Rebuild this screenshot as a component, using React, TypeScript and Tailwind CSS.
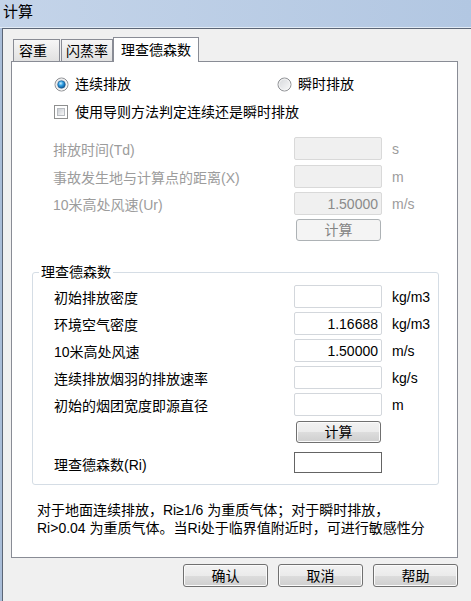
import { useId, type ReactNode } from 'react';

// ── Shared bits ───────────────────────────────────────────────────────────────

const FONT = "font-['Liberation_Sans','Noto_Sans_CJK_SC',sans-serif]";

function Radio({ checked }: { checked: boolean }) {
  const id = useId().replace(/:/g, '');
  return (
    <svg width="15" height="15" viewBox="0 0 15 15" className="shrink-0">
      <defs>
        <linearGradient id={`${id}f`} x1="0" y1="0" x2="1" y2="1">
          <stop offset="0" stopColor="#d4d6d9" />
          <stop offset="1" stopColor="#fbfbfb" />
        </linearGradient>
        <radialGradient id={`${id}d`} cx="0.4" cy="0.35" r="0.7">
          <stop offset="0" stopColor="#c8eeff" />
          <stop offset="0.45" stopColor="#2b9be0" />
          <stop offset="1" stopColor="#0c4a86" />
        </radialGradient>
      </defs>
      <circle cx="7.5" cy="7.5" r="6.5" fill={`url(#${id}f)`} stroke="#8d8f93" />
      <circle cx="7.5" cy="7.5" r="5.4" fill="none" stroke="#f6f6f6" strokeWidth="0.8" />
      {checked && (
        <circle cx="7.5" cy="7.5" r="3.8" fill={`url(#${id}d)`} stroke="#1b5a91" strokeWidth="0.6" />
      )}
    </svg>
  );
}

function Checkbox() {
  return (
    <span className="flex w-[14px] h-[14px] shrink-0 border border-[#8e8f8f] bg-white p-[2px]">
      <span className="flex-1 border border-[#b8bcc1] bg-[linear-gradient(135deg,#caced4,#f7f7f7)]" />
    </span>
  );
}

function Field({ value, disabled }: { value?: string; disabled?: boolean }) {
  return (
    <div
      className={`flex items-center justify-end w-[88px] h-[23px] shrink-0 pr-[3px] rounded-[2px] border text-[14px] ${
        disabled ? 'bg-[#f0f0f0] border-[#d9d9d9] text-[#8a8a8a]' : 'bg-white border-[#d3d7dc] text-black'
      }`}
    >
      {value}
    </div>
  );
}

function Btn({ children, disabled, wide }: { children: ReactNode; disabled?: boolean; wide?: boolean }) {
  return (
    <div
      className={`flex items-center justify-center shrink-0 rounded-[3px] border text-[14px] leading-none ${
        wide ? 'w-[85px] h-[23px]' : 'w-[85px] h-[22px]'
      } ${
        disabled
          ? 'bg-[#f4f4f4] border-[#adb2b5] text-[#838383]'
          : 'bg-[linear-gradient(#f2f2f2_0%,#ebebeb_50%,#dddddd_50%,#cfcfcf_100%)] border-[#707070] text-black shadow-[inset_0_0_0_1px_#fbfbfb]'
      }`}
    >
      {children}
    </div>
  );
}

function Row({ label, value, unit, disabled, labelW }: {
  label: string;
  value?: string;
  unit?: string;
  disabled?: boolean;
  labelW: string;
}) {
  return (
    <div className="flex items-center h-[23px]">
      <span className={`${labelW} pt-[2px] whitespace-nowrap ${disabled ? 'text-[#9c9c9c]' : 'text-black'}`}>{label}</span>
      <Field value={value} disabled={disabled} />
      <span className={`ml-[10px] pt-[1px] ${disabled ? 'text-[#9c9c9c]' : 'text-black'}`}>{unit}</span>
    </div>
  );
}

// ── Page ──────────────────────────────────────────────────────────────────────

export default function App() {
  return (
    <div className={`${FONT} flex flex-col w-[471px] h-[601px] overflow-hidden bg-[#f0f0f0] text-[14px] leading-[18px] text-black`}>
      {/* Title bar */}
      <div className="h-[28px] shrink-0 border-b border-[#e2ebf5] bg-[linear-gradient(90deg,#c4d4e9,#b2c7e2)] pl-[3px] pt-[3px] text-[15px] leading-[18px]">
        计算
      </div>

      {/* Window body */}
      <div className="flex-1 flex border-l-2 border-[#a9bdd8]">
        <div className="flex-1 flex flex-col border-l border-t border-[#5c6676] pt-[8px]">
          {/* Tabs */}
          <div className="flex items-end h-[24px] ml-[10px]">
            <div className="w-[47px] h-[22px] pl-[5px] flex items-center border border-b-0 border-[#898c95] bg-[linear-gradient(#f6f6f6,#e1e1e1)]">
              容重
            </div>
            <div className="w-[52px] h-[22px] ml-px pl-[4px] flex items-center border border-b-0 border-[#898c95] bg-[linear-gradient(#f6f6f6,#e1e1e1)]">
              闪蒸率
            </div>
            <div className="relative z-10 -mb-px w-[86px] h-[25px] pl-[7px] flex items-center border border-b-0 border-[#898c95] bg-white">
              理查德森数
            </div>
          </div>

          {/* Tab panel */}
          <div className="ml-[8px] w-[447px] h-[497px] flex flex-col border border-[#898c95] bg-white">
            {/* Mode radios */}
            <div className="flex items-center h-[20px] mt-[12px] pl-[42px]">
              <div className="flex items-center w-[223px] gap-[6px]">
                <Radio checked />
                <span>连续排放</span>
              </div>
              <div className="flex items-center gap-[6px]">
                <Radio checked={false} />
                <span>瞬时排放</span>
              </div>
            </div>
            <div className="flex items-center h-[20px] mt-[8px] pl-[42px] gap-[7px]">
              <Checkbox />
              <span>使用导则方法判定连续还是瞬时排放</span>
            </div>

            {/* Disabled guideline inputs */}
            <div className="flex flex-col pl-[41px] mt-[15px]">
              <Row labelW="w-[241px]" label="排放时间(Td)" unit="s" disabled />
              <div className="mt-[5px]">
                <Row labelW="w-[241px]" label="事故发生地与计算点的距离(X)" unit="m" disabled />
              </div>
              <div className="mt-[4px]">
                <Row labelW="w-[241px]" label="10米高处风速(Ur)" value="1.50000" unit="m/s" disabled />
              </div>
              <div className="mt-[4px] pl-[243px]">
                <Btn disabled>计算</Btn>
              </div>
            </div>

            {/* Richardson group */}
            <fieldset className="mt-[23px] ml-[20px] w-[407px] p-0 m-0 border border-[#d5dde5] rounded-[3px]">
              <legend className="ml-[6px] px-[2px] leading-[16px]">理查德森数</legend>
              <div className="flex flex-col pl-[21px] pt-[5px] pb-[11px]">
                <Row labelW="w-[240px]" label="初始排放密度" unit="kg/m3" />
                <div className="mt-[4px]">
                  <Row labelW="w-[240px]" label="环境空气密度" value="1.16688" unit="kg/m3" />
                </div>
                <div className="mt-[4px]">
                  <Row labelW="w-[240px]" label="10米高处风速" value="1.50000" unit="m/s" />
                </div>
                <div className="mt-[4px]">
                  <Row labelW="w-[240px]" label="连续排放烟羽的排放速率" unit="kg/s" />
                </div>
                <div className="mt-[4px]">
                  <Row labelW="w-[240px]" label="初始的烟团宽度即源直径" unit="m" />
                </div>
                <div className="mt-[5px] pl-[242px]">
                  <Btn>计算</Btn>
                </div>
                <div className="flex items-center h-[21px] mt-[9px]">
                  <span className="w-[240px] pt-[5px]">理查德森数(Ri)</span>
                  <div className="w-[88px] h-[21px] border border-[#646464] bg-white" />
                </div>
              </div>
            </fieldset>

            {/* Note */}
            <div className="mt-[16px] pl-[25px] flex flex-col whitespace-nowrap">
              <span className="h-[18px]">对于地面连续排放，Ri≥1/6 为重质气体；对于瞬时排放，</span>
              <span className="h-[18px]">Ri&gt;0.04 为重质气体。当Ri处于临界值附近时，可进行敏感性分</span>
            </div>
          </div>

          {/* Dialog buttons */}
          <div className="flex justify-end gap-[10px] mt-[6px] pr-[13px]">
            <Btn wide>确认</Btn>
            <Btn wide>取消</Btn>
            <Btn wide>帮助</Btn>
          </div>
        </div>
      </div>
    </div>
  );
}
